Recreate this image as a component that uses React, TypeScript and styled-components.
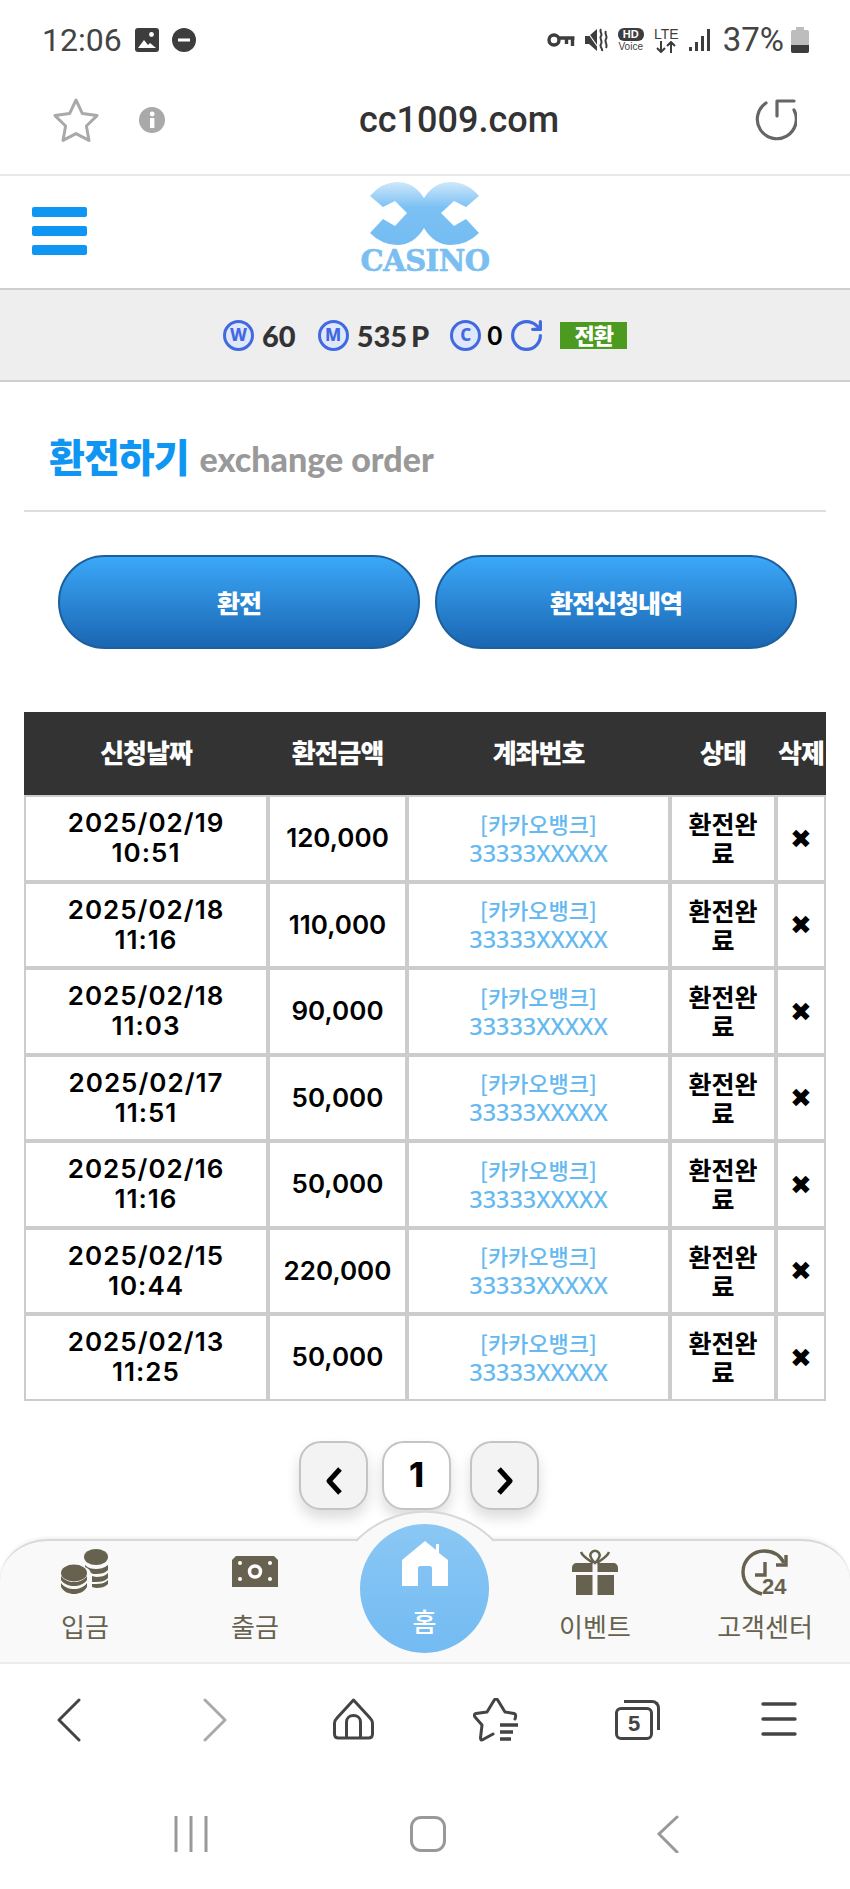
import React from "react";
import styled, { createGlobalStyle } from "styled-components";
import { RotateCw } from "lucide-react";

const Global = createGlobalStyle`
  html, body { margin: 0; padding: 0; background: #fff; }
  body { width: 850px; height: 1889px; overflow: hidden; font-family: "Noto Sans CJK KR", "Noto Sans", sans-serif; }
  * { box-sizing: border-box; }
`;

const rows = [
  ["2025/02/19", "10:51", "120,000"],
  ["2025/02/18", "11:16", "110,000"],
  ["2025/02/18", "11:03", "90,000"],
  ["2025/02/17", "11:51", "50,000"],
  ["2025/02/16", "11:16", "50,000"],
  ["2025/02/15", "10:44", "220,000"],
  ["2025/02/13", "11:25", "50,000"],
];

const Grey = "#66624f";

export default function App() {
  return (
    <Page>
      <Global />
      <StatusBar>
        <StatusLeft>
          <Clock>12:06</Clock>
          <svg width="24" height="24" viewBox="0 0 24 24">
            <rect x="0" y="0" width="24" height="24" rx="3" fill="#3d3d3d" />
            <circle cx="16.5" cy="6.5" r="2.4" fill="#fff" />
            <path d="M3 20l6-8 4 5 2-2 6 5z" fill="#fff" />
          </svg>
          <svg width="24" height="24" viewBox="0 0 24 24">
            <circle cx="12" cy="12" r="12" fill="#3d3d3d" />
            <rect x="6" y="10.5" width="12" height="3" fill="#fff" />
          </svg>
        </StatusLeft>
        <StatusRight>
          <svg width="28" height="16" viewBox="0 0 28 16" fill="none" stroke="#3d3d3d" strokeWidth="3.4">
            <circle cx="7" cy="8" r="5" />
            <path d="M12 6h15.500M25.500 6v8M19.500 6v6" />
          </svg>
          <svg width="23" height="24" viewBox="0 0 23 24" fill="#3d3d3d">
            <path d="M0 8h4l8-7v22l-8-7H0z" />
            <path d="M16 1c-2 3 2 5 0 7s2 5 0 8 2 4 1 7M21 3c-2 3 2 5 0 8s2 5 0 9" fill="none" stroke="#3d3d3d" strokeWidth="2" />
            <path d="M1 2l14 20" stroke="#fff" strokeWidth="1.2" />
          </svg>
          <HdIcon>
            <HdBadge>HD</HdBadge>
            <HdVoice>Voice</HdVoice>
          </HdIcon>
          <LteIcon>
            <LteText>LTE</LteText>
            <svg width="22" height="12" viewBox="0 0 22 12" fill="none" stroke="#3d3d3d" strokeWidth="2">
              <path d="M6 0v11M2 7l4 4 4-4M16 12V1M12 5l4-4 4 4" />
            </svg>
          </LteIcon>
          <svg width="22" height="24" viewBox="0 0 22 24" fill="#3d3d3d">
            <rect x="0" y="19" width="3" height="4" />
            <rect x="6" y="14" width="3" height="9" />
            <rect x="12" y="8" width="3" height="15" />
            <rect x="18" y="1" width="3" height="22" />
          </svg>
          <Percent>37%</Percent>
          <svg width="18" height="26" viewBox="0 0 18 26">
            <path d="M5 0h8v3h3a2 2 0 0 1 2 2v19a2 2 0 0 1-2 2H2a2 2 0 0 1-2-2V5a2 2 0 0 1 2-2h3z" fill="#bdbdbd" />
            <path d="M0 18h18v6a2 2 0 0 1-2 2H2a2 2 0 0 1-2-2z" fill="#3d3d3d" />
          </svg>
        </StatusRight>
      </StatusBar>

      <AddressBar>
        <AddressLeft>
          <svg width="46" height="44" viewBox="0 0 46 44" fill="none" stroke="#a9a9a9" strokeWidth="3" strokeLinejoin="round">
            <path d="M23 2l6.4 13.6 14.6 2-10.6 10.4 2.6 14.4L23 35.6 10 42.4l2.6-14.4L2 17.6l14.6-2z" />
          </svg>
          <svg width="26" height="26" viewBox="0 0 26 26">
            <circle cx="13" cy="13" r="13" fill="#a9a9a9" />
            <rect x="11" y="11" width="4.4" height="10" fill="#fff" />
            <circle cx="13.2" cy="7" r="2.4" fill="#fff" />
          </svg>
        </AddressLeft>
        <Url>cc1009.com</Url>
        <svg width="44" height="44" viewBox="0 0 44 44" fill="none" stroke="#666" strokeWidth="3.2" strokeLinecap="round" strokeLinejoin="round">
          <path d="M13 5A19.500 19.500 0 1 0 41 12" />
          <path d="M41 3H24v15" />
        </svg>
      </AddressBar>

      <SiteHeader>
        <Burger>
          <i />
          <i />
          <i />
        </Burger>
        <Logo>
          <svg width="112" height="64" viewBox="0 0 112 64">
            <defs>
              <linearGradient id="lg" x1="0" y1="0" x2="0" y2="1">
                <stop offset="0" stopColor="#cfe8fb" />
                <stop offset="0.4" stopColor="#7cc1f4" />
                <stop offset="1" stopColor="#74bcf2" />
              </linearGradient>
            </defs>
            <path
              d="M1 14Q13 0 28 0Q45 0 55 16Q65 0 82 0Q98 0 110 14L97 25L85 19L72 31L85 44L97 37L110 51Q98 63 82 63Q65 63 55 46Q45 63 28 63Q13 63 1 51L14 37L26 44L38 31L26 19L14 25Z"
              fill="url(#lg)"
            />
          </svg>
          <LogoWord>CASINO</LogoWord>
        </Logo>
      </SiteHeader>

      <BalanceBar>
        <Coin>W</Coin>
        <Amount>60</Amount>
        <Coin $left={22}>M</Coin>
        <Amount>535 P</Amount>
        <Coin $left={21}>C</Coin>
        <Zero>0</Zero>
        <RotateCw size={37} color="#4169e1" strokeWidth={2.1} style={{ marginLeft: 6 }} />
        <SwapTag>전환</SwapTag>
      </BalanceBar>

      <TitleRow>
        <TitleMain>환전하기</TitleMain>
        <TitleSub>exchange order</TitleSub>
      </TitleRow>

      <Actions>
        <BigButton>환전</BigButton>
        <BigButton>환전신청내역</BigButton>
      </Actions>

      <Table>
        <HeadCell>신청날짜</HeadCell>
        <HeadCell>환전금액</HeadCell>
        <HeadCell>계좌번호</HeadCell>
        <HeadCell>상태</HeadCell>
        <HeadCell>삭제</HeadCell>
        {rows.map((r, i) => (
          <React.Fragment key={i}>
            <DateCell>
              <div>
                {r[0]}
                <br />
                {r[1]}
              </div>
            </DateCell>
            <Cell>{r[2]}</Cell>
            <BankCell>
              <div>
                [카카오뱅크]
                <br />
                <BankNo>33333XXXXX</BankNo>
              </div>
            </BankCell>
            <StatusCell>환전완료</StatusCell>
            <RemoveCell>✖</RemoveCell>
          </React.Fragment>
        ))}
      </Table>

      <Pager>
        <PageBtn>
          <svg width="20" height="30" viewBox="0 0 20 30" fill="none" stroke="#000" strokeWidth="5" strokeLinejoin="round">
            <path d="M16 3L5 15l11 12" />
          </svg>
        </PageBtn>
        <PageBtn $current>1</PageBtn>
        <PageBtn $gap>
          <svg width="20" height="30" viewBox="0 0 20 30" fill="none" stroke="#000" strokeWidth="5" strokeLinejoin="round">
            <path d="M4 3l11 12L4 27" />
          </svg>
        </PageBtn>
      </Pager>

      <BottomNav>
        <Bump>
          <svg width="138" height="36" viewBox="0 0 138 36">
            <rect x="1" y="30" width="136" height="6" fill="#f9f9f9" />
            <path d="M0 32A96 96 0 0 1 138 32" fill="#f9f9f9" stroke="#d8d8d8" strokeWidth="2" />
          </svg>
        </Bump>
        <NavItem>
          <NavIcon>
            <svg width="48" height="46" viewBox="0 0 48 46" fill={Grey}>
              <ellipse cx="35" cy="8" rx="12" ry="8" />
              <path d="M24 16c3 3 7 4 11 4s8-1 12-4v5c-3 3-7 4-12 4-2 0-3 0-5-1-1-3-3-5-6-6zM31 27c1 0 3 1 4 1 5 0 9-1 12-4v5c-3 3-7 4-12 4h-4zM31 35h4c5 0 9-1 12-4v4c-3 3-7 4-12 4l-4-1z" />
              <ellipse cx="13" cy="24" rx="13" ry="8.5" />
              <path d="M0 27c3 4 8 6 13 6s10-2 13-6v4c-3 4-8 6-13 6S3 35 0 31zM0 34c3 4 8 6 13 6s10-2 13-6v4c-3 5-8 7-13 7S3 43 0 38z" />
            </svg>
          </NavIcon>
          <NavLabel>입금</NavLabel>
        </NavItem>
        <NavItem>
          <NavIcon>
            <svg width="46" height="31" viewBox="0 0 46 31">
              <path d="M4 0h38l4 4v27H0V4z" fill={Grey} />
              <circle cx="23" cy="15.500" r="5.500" fill="none" stroke="#fff" strokeWidth="3.500" />
              <circle cx="8" cy="7" r="2" fill="#fff" />
              <circle cx="38" cy="7" r="2" fill="#fff" />
              <circle cx="8" cy="23" r="2" fill="#fff" />
              <circle cx="38" cy="23" r="2" fill="#fff" />
            </svg>
          </NavIcon>
          <NavLabel>출금</NavLabel>
        </NavItem>
        <NavItem />
        <NavItem>
          <NavIcon>
            <svg width="46" height="46" viewBox="0 0 46 46" fill={Grey}>
              <path d="M0 23v-4c0-3 2-5 5-5h15.500v9zM46 23v-4c0-3-2-5-5-5H25.500v9zM4 26h16.500v20H4zM25.500 26H42v20H25.500z" />
              <path d="M21 14C16 10 11 8 9 3M25 14c5-4 10-6 12-11M23 14c-4-4-6-7-4-10 2-3 6-3 8 0 2 3 0 6-4 10z" fill="none" stroke={Grey} strokeWidth="2.500" />
            </svg>
          </NavIcon>
          <NavLabel>이벤트</NavLabel>
        </NavItem>
        <NavItem>
          <NavIcon>
            <svg width="46" height="46" viewBox="0 0 46 46" fill="none" stroke={Grey} strokeWidth="3.400">
              <path d="M20 45C8 42 1 33 1 23 1 11 11 2 22 2c9 0 16 4 20 12" />
              <path d="M44 6v10H34" />
              <path d="M23 13v13H13" />
              <text x="20" y="45" fontSize="22" fontWeight="700" fill={Grey} stroke="none" fontFamily="Liberation Sans, sans-serif">24</text>
            </svg>
          </NavIcon>
          <NavLabel>고객센터</NavLabel>
        </NavItem>
        <HomeCircle>
          <svg width="46" height="46" viewBox="0 0 46 46" fill="#fff">
            <path d="M0 45V19L23 0l11 9V3h3v9l9 7v26H30V27c0-1-1-2-2-2H18c-1 0-2 1-2 2v18z" />
          </svg>
          <HomeLabel>홈</HomeLabel>
        </HomeCircle>
      </BottomNav>

      <BrowserBar>
        <svg width="24" height="44" viewBox="0 0 24 44" fill="none" stroke="#444" strokeWidth="3" strokeLinecap="round" strokeLinejoin="round">
          <path d="M22 2L2 22l20 20" />
        </svg>
        <svg width="24" height="44" viewBox="0 0 24 44" fill="none" stroke="#aaa" strokeWidth="3" strokeLinecap="round" strokeLinejoin="round">
          <path d="M2 2l20 20L2 42" />
        </svg>
        <svg width="42" height="42" viewBox="0 0 42 42" fill="none" stroke="#444" strokeWidth="3" strokeLinejoin="round">
          <path d="M20.500 2L4 20c-2 2-2.500 3-2.500 5v11c0 2.500 1.500 4 4 4h30c2.500 0 4-1.500 4-4V25c0-2-.5-3-2.500-5z" />
          <path d="M13.500 40V24c0-4 3-6.500 7-6.500s7 2.500 7 6.500v16" />
        </svg>
        <svg width="47" height="44" viewBox="0 0 47 44" fill="none" stroke="#444" strokeWidth="3" strokeLinecap="round" strokeLinejoin="round">
          <path d="M42 21c1-3 1-5-1-5.500L32 14 25 2.500c-1-2-3-2-4 0L14 14 3 15.500c-2 .5-2 2-1 3.500l7 8-1.500 13c0 2 1 2.500 2.500 1.500L20 36" />
          <path d="M27 27h18M27 34h13M27 41h11" strokeWidth="3.400" strokeLinecap="butt" />
        </svg>
        <TabsIcon>
          <TabsBack />
          <TabsFront>5</TabsFront>
        </TabsIcon>
        <MenuIcon width="36" height="34" viewBox="0 0 36 34" stroke="#444" strokeWidth="3.400" strokeLinecap="round">
          <path d="M2 2h32M2 17h32M2 32h32" />
        </MenuIcon>
      </BrowserBar>

      <SystemNav>
        <svg width="34" height="38" viewBox="0 0 34 38" stroke="#999" strokeWidth="3">
          <path d="M2 1v36M17 1v36M32 1v36" />
        </svg>
        <SquareKey />
        <svg width="22" height="38" viewBox="0 0 22 38" fill="none" stroke="#999" strokeWidth="3" strokeLinecap="round">
          <path d="M20 2L2 19l18 18" />
        </svg>
      </SystemNav>
    </Page>
  );
}

const Page = styled.div`
  width: 850px;
  height: 1889px;
  background: #fff;
  overflow: hidden;
`;

const StatusBar = styled.div`
  height: 68px;
  padding: 27px 41px 0 42px;
  display: flex;
  justify-content: space-between;
  align-items: flex-start;
`;

const StatusLeft = styled.div`
  display: flex;
  align-items: center;
  gap: 13px;
`;

const Clock = styled.span`
  font: 400 32px/26px "Roboto", sans-serif;
  color: #444;
`;

const StatusRight = styled.div`
  display: flex;
  align-items: center;
  gap: 10px;
  height: 26px;
`;

const HdIcon = styled.div`
  width: 26px;
  display: flex;
  flex-direction: column;
  align-items: center;
`;

const HdBadge = styled.div`
  width: 26px;
  height: 13px;
  border-radius: 6px;
  background: #3d3d3d;
  color: #fff;
  font: 700 11px/13px "Liberation Sans", sans-serif;
  text-align: center;
`;

const HdVoice = styled.div`
  font: 400 10px/12px "Liberation Sans", sans-serif;
  color: #3d3d3d;
`;

const LteIcon = styled.div`
  width: 25px;
  display: flex;
  flex-direction: column;
  align-items: center;
`;

const LteText = styled.div`
  font: 400 14px/14px "Liberation Sans", sans-serif;
  color: #3d3d3d;
`;

const Percent = styled.span`
  font: 400 33px/26px "Roboto", sans-serif;
  color: #444;
  margin: 0 -3px 0 2px;
`;

const AddressBar = styled.div`
  height: 108px;
  padding: 4px 53px 6px 53px;
  display: flex;
  align-items: center;
  justify-content: space-between;
  border-bottom: 2px solid #e8e8e8;
  position: relative;
`;

const AddressLeft = styled.div`
  display: flex;
  align-items: center;
  gap: 40px;
`;

const Url = styled.div`
  position: absolute;
  left: 359px;
  top: 32px;
  font: 500 36px/40px "Roboto", sans-serif;
  color: #333;
`;

const SiteHeader = styled.div`
  height: 114px;
  position: relative;
  border-bottom: 2px solid #cfcfcf;
`;

const Burger = styled.div`
  position: absolute;
  left: 32px;
  top: 31px;
  width: 55px;
  display: flex;
  flex-direction: column;
  gap: 9.500px;
  i {
    display: block;
    height: 9.500px;
    border-radius: 2px;
    background: #0f96f2;
  }
`;

const Logo = styled.div`
  width: 130px;
  margin: 0 auto;
  padding-top: 6px;
  display: flex;
  flex-direction: column;
  align-items: center;
`;

const LogoWord = styled.div`
  margin-top: 2px;
  font: 700 29px/27px "DejaVu Serif", serif;
  color: #7bbff2;
  -webkit-text-stroke: 0.7px #7bbff2;
  white-space: nowrap;
  letter-spacing: -0.5px;
`;

const BalanceBar = styled.div`
  height: 92px;
  background: #eeeeef;
  border-bottom: 2px solid #cfcfcf;
  padding-left: 223px;
  display: flex;
  align-items: center;
`;

const Coin = styled.div<{ $left?: number }>`
  width: 31px;
  height: 31px;
  border-radius: 50%;
  border: 3.500px solid #4169e1;
  color: #4169e1;
  background: #dfe7fb;
  margin-left: ${(p) => p.$left || 0}px;
  font: 800 17px/24px "Noto Sans", sans-serif;
  text-align: center;
`;

const Amount = styled.span`
  margin-left: 8px;
  font: 900 29px/31px "Lato", sans-serif;
  word-spacing: -3px;
  color: #333;
`;

const Zero = styled.span`
  margin-left: 6px;
  font: 700 26px/31px "Lato", sans-serif;
  color: #000;
`;

const SwapTag = styled.div`
  margin-left: 15px;
  width: 67px;
  height: 27px;
  background: #4c9a1f;
  color: #fff;
  font: 900 22px/25px "Noto Sans CJK KR", sans-serif;
  letter-spacing: -1px;
  text-align: center;
`;

const TitleRow = styled.div`
  height: 130px;
  margin: 0 24px;
  padding: 48px 0 0 25px;
  border-bottom: 2px solid #ddd;
  display: flex;
  align-items: baseline;
  gap: 11px;
`;

const TitleMain = styled.span`
  font: 900 39px/50px "Noto Sans CJK KR", sans-serif;
  color: #0f96f2;
  letter-spacing: -1px;
`;

const TitleSub = styled.span`
  font: 900 34px/50px "Lato", sans-serif;
  color: #999;
`;

const Actions = styled.div`
  display: grid;
  grid-template-columns: 362px 362px;
  gap: 15px;
  margin: 43px 0 0 58px;
`;

const BigButton = styled.div`
  height: 94px;
  border-radius: 47px;
  border: 2px solid #1c5f9f;
  background: linear-gradient(#3ba8f8, #1a66b2);
  color: #fff;
  font: 900 25px/90px "Noto Sans CJK KR", sans-serif;
  letter-spacing: -1px;
  text-align: center;
`;

const Table = styled.div`
  width: 802px;
  margin: 63px 0 0 24px;
  display: grid;
  grid-template-columns: 244px 139px 263px 106px 50px;
  grid-template-rows: 83px repeat(7, 86.500px);
`;

const HeadCell = styled.div`
  background: #333;
  color: #fff;
  font: 900 26px/80px "Noto Sans CJK KR", sans-serif;
  letter-spacing: -1px;
  text-align: center;
  white-space: nowrap;
`;

const Cell = styled.div`
  border: 2px solid #ccc;
  display: flex;
  align-items: center;
  justify-content: center;
  text-align: center;
  font: 600 26px/30px "Inter", "Noto Sans CJK KR", sans-serif;
  color: #000;
`;

const DateCell = styled(Cell)`
  letter-spacing: 1px;
`;

const BankCell = styled(Cell)`
  font: 500 22px/29px "Noto Sans CJK KR", sans-serif;
  color: #65b9f0;
`;

const BankNo = styled.span`
  font: 500 23.400px/29px "Noto Sans", sans-serif;
`;

const StatusCell = styled(Cell)`
  padding: 0 12px;
  font: 700 25px/29px "Noto Sans CJK KR", sans-serif;
`;

const RemoveCell = styled(Cell)`
  font: 700 26px/29px "Noto Sans", "DejaVu Sans", sans-serif;
`;

const Pager = styled.div`
  display: flex;
  margin: 40px 0 0 299px;
  gap: 14px;
`;

const PageBtn = styled.div<{ $current?: boolean; $gap?: boolean }>`
  width: 69px;
  height: 69px;
  border-radius: 22px;
  border: 2px solid #c4c4c4;
  background: ${(p) => (p.$current ? "#fff" : "#f3f3f3")};
  box-shadow: 0 8px 14px rgba(0, 0, 0, 0.14);
  margin-left: ${(p) => (p.$gap ? 5 : 0)}px;
  display: flex;
  align-items: center;
  justify-content: center;
  font: 800 34px/1 "Inter", sans-serif;
  color: #000;
  svg {
    margin-top: 12px;
  }
`;

const BottomNav = styled.div`
  position: relative;
  height: 125px;
  margin-top: 29px;
  padding-top: 8px;
  background: #f9f9f9;
  border-top: 2px solid #d8d8d8;
  border-bottom: 2px solid #ececec;
  border-radius: 48px 48px 0 0 / 42px 42px 0 0;
  box-shadow: 0 -2px 3px rgba(0, 0, 0, 0.05);
  display: grid;
  grid-template-columns: repeat(5, 170px);
`;

const NavItem = styled.div`
  display: flex;
  flex-direction: column;
  align-items: center;
`;

const NavIcon = styled.div`
  height: 46px;
  display: flex;
  align-items: center;
  justify-content: center;
  svg {
    overflow: visible;
  }
`;

const NavLabel = styled.div`
  margin-top: 16px;
  font: 400 26px/30px "Noto Sans CJK KR", sans-serif;
  color: ${Grey};
`;

const Bump = styled.div`
  position: absolute;
  left: 356px;
  top: -32px;
  width: 138px;
  height: 36px;
  svg {
    display: block;
    overflow: visible;
  }
`;

const HomeCircle = styled.div`
  position: absolute;
  left: 360px;
  top: -17px;
  width: 129px;
  height: 129px;
  border-radius: 50%;
  background: linear-gradient(#8ac7f4, #73bbf2);
  display: flex;
  flex-direction: column;
  align-items: center;
  padding-top: 17px;
`;

const HomeLabel = styled.div`
  margin-top: 19px;
  font: 500 26px/30px "Noto Sans CJK KR", sans-serif;
  color: #fff;
`;

const BrowserBar = styled.div`
  height: 151px;
  padding-top: 34px;
  display: grid;
  grid-template-columns: 137px 155px 123px 162px 121px 162px;
  justify-items: center;
  align-items: start;
`;

const MenuIcon = styled.svg`
  margin-top: 4px;
`;

const TabsIcon = styled.div`
  position: relative;
  width: 45px;
  height: 40px;
  margin-top: 2px;
`;

const TabsBack = styled.div`
  position: absolute;
  right: 0;
  top: 0;
  width: 36px;
  height: 30px;
  border-top: 3px solid #444;
  border-right: 3px solid #444;
  border-radius: 0 8px 0 0;
`;

const TabsFront = styled.div`
  position: absolute;
  left: 0;
  bottom: 0;
  width: 38px;
  height: 33px;
  border: 3px solid #444;
  border-radius: 6px;
  background: #fff;
  font: 700 22px/27px "Liberation Sans Narrow", "Liberation Sans", sans-serif;
  color: #444;
  text-align: center;
`;

const SystemNav = styled.div`
  display: flex;
  padding-left: 174px;
  align-items: center;
`;

const SquareKey = styled.div`
  width: 36px;
  height: 36px;
  margin-left: 202px;
  margin-right: 211px;
  border: 3px solid #999;
  border-radius: 11px;
`;
